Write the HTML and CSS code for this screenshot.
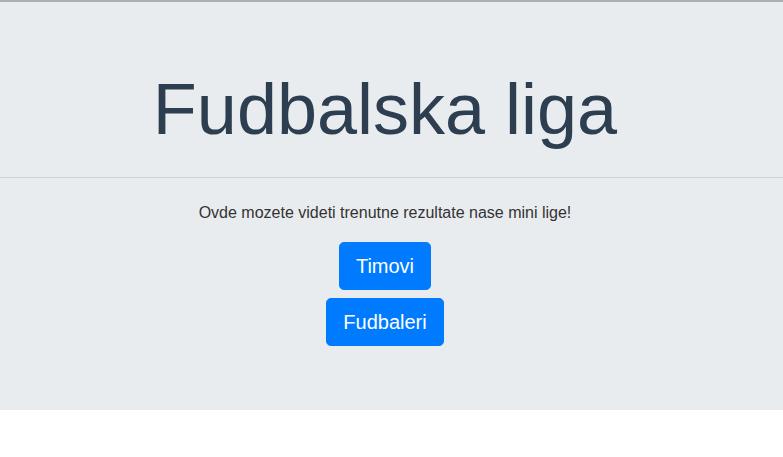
FILE: index.html
```html
<!DOCTYPE html>
<html lang="sr">
<head>
<meta charset="utf-8">
<title>Fudbalska liga</title>
<link rel="stylesheet" href="styles.css">
</head>
<body>
<div class="jumbotron">
  <h1 class="title">Fudbalska liga</h1>
  <hr class="divider">
  <p class="lead">Ovde mozete videti trenutne rezultate nase mini lige!</p>
  <div class="actions">
    <a class="btn" href="#">Timovi</a>
    <a class="btn" href="#">Fudbaleri</a>
  </div>
</div>
</body>
</html>
```
FILE: styles.css
```css
html, body {
  margin: 0;
  padding: 0;
  background: #fff;
  font-family: "Liberation Sans", Arial, sans-serif;
}
body {
  border-top: 2px solid #a9b0b7;
}
.jumbotron {
  background: #e9ecef;
  padding: 64px 45px 64px 32px;
  text-align: center;
}
.title {
  margin: 0 0 8px;
  font-size: 72px;
  font-weight: 400;
  line-height: 1.2;
  color: #2c3e50;
}
.divider {
  border: 0;
  border-top: 1px solid rgba(0,0,0,0.1);
  margin: 25px -45px 23px -32px;
}
.lead {
  margin: 0 0 17px;
  font-size: 16px;
  line-height: 24px;
  color: #333;
}
.actions {
  display: flex;
  flex-direction: column;
  align-items: center;
  gap: 8px;
}
.btn {
  display: inline-block;
  background: #007bff;
  color: #fff;
  border: 1px solid #007bff;
  border-radius: 4.8px;
  padding: 8px 16px;
  font-size: 20px;
  line-height: 30px;
  text-decoration: none;
}
```
